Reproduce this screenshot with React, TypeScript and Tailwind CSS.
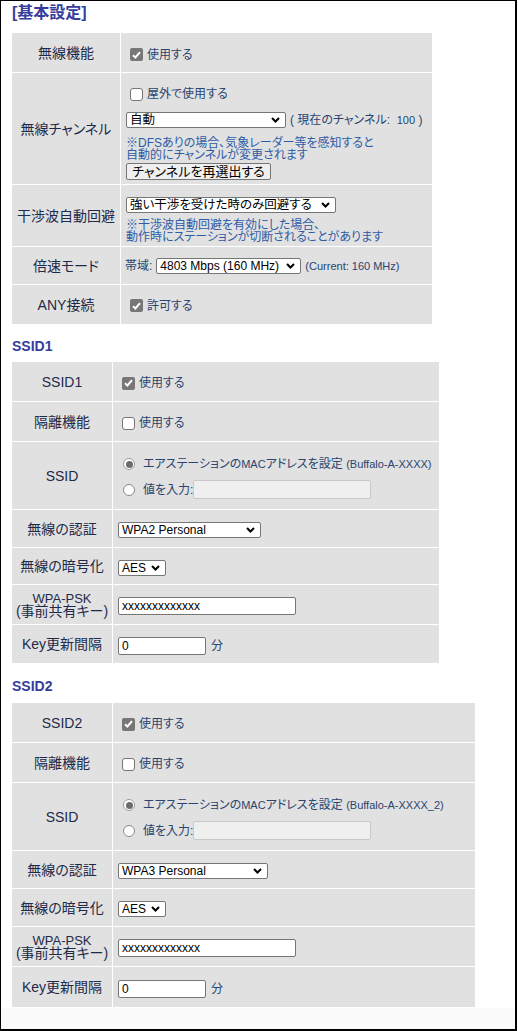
import React from 'react'

const labelCls =
  'bg-[#e1e1e1] flex flex-col items-center justify-center text-center text-[14px] leading-[14px] text-[#1e2a4a]'
const cellCls = 'bg-[#e1e1e1]'
const txt = 'text-[12px] leading-[14px] text-[#29446f] whitespace-pre'

function CheckBox({ on }: { on?: boolean }) {
  if (on) {
    return (
      <span className="w-[13px] h-[13px] rounded-[2px] bg-[#777777] flex items-center justify-center shrink-0">
        <svg width="9" height="8" viewBox="0 0 9 8">
          <path d="M1 4.3 L3.4 6.5 L8 1.2" fill="none" stroke="#fff" strokeWidth="2" />
        </svg>
      </span>
    )
  }
  return <span className="w-[13px] h-[13px] rounded-[3px] border border-[#767676] bg-white shrink-0" />
}

function Radio({ on }: { on?: boolean }) {
  if (on) {
    return (
      <span className="w-[12px] h-[12px] rounded-full border border-[#9d9d9d] bg-white flex items-center justify-center shrink-0">
        <span className="w-[7px] h-[7px] rounded-full bg-[#6b6b6b]" />
      </span>
    )
  }
  return <span className="w-[12px] h-[12px] rounded-full border border-[#8a8a8a] bg-white shrink-0" />
}

function Check({ on, text }: { on?: boolean; text: string }) {
  return (
    <div className="flex items-center">
      <CheckBox on={on} />
      <span className={`${txt} ml-[4px]`}>{text}</span>
    </div>
  )
}

function Chevron() {
  return (
    <svg width="9" height="6" viewBox="0 0 9 6" className="shrink-0">
      <path d="M1 1 L4.5 4.5 L8 1" fill="none" stroke="#000" strokeWidth="2" />
    </svg>
  )
}

function Select({ text, w, jp }: { text: string; w: string; jp?: boolean }) {
  return (
    <div
      className={`${w} h-[16px] border border-[#767676] rounded-[2px] bg-white flex items-center pl-[3px] pr-[5px] ${jp ? 'text-[12.5px]' : 'text-[12px]'} leading-[14px] text-black shrink-0`}
    >
      <span className="flex-1 whitespace-nowrap overflow-hidden">{text}</span>
      <Chevron />
    </div>
  )
}

function Input({ value, w }: { value: string; w: string }) {
  return (
    <div
      className={`${w} h-[18px] border border-[#767676] rounded-[2px] bg-white flex items-center pl-[3px] text-[12px] leading-[14px] text-black shrink-0`}
    >
      {value}
    </div>
  )
}

interface SsidProps {
  name: string
  mac: string
  auth: string
  authW: string
  cols: string
  hs: string[]
}

function SsidTable({ name, mac, auth, authW, cols, hs }: SsidProps) {
  return (
    <div className={`grid ${cols} gap-px w-fit`}>
      <div className={`${labelCls} ${hs[0]}`}>{name}</div>
      <div className={`${cellCls} flex items-center pl-[9px] pt-[3px]`}>
        <Check on text="使用する" />
      </div>

      <div className={`${labelCls} ${hs[1]}`}>隔離機能</div>
      <div className={`${cellCls} flex items-center pl-[9px] pt-[3px]`}>
        <Check text="使用する" />
      </div>

      <div className={`${labelCls} ${hs[2]}`}>SSID</div>
      <div className={`${cellCls} flex flex-col pt-[14px] pl-[10px]`}>
        <div className="flex items-center h-[16px]">
          <Radio on />
          <span className={`${txt} ml-[8px]`}>
            エアステーションの<span className="text-[11px]">MAC</span>アドレスを設定{' '}
            <span className="text-[11px]">({mac})</span>
          </span>
        </div>
        <div className="flex items-center mt-[8px]">
          <Radio />
          <span className={`${txt} ml-[8px]`}>値を入力:</span>
          <div className="w-[178px] h-[19px] border border-[#c9c9c9] rounded-[2px] bg-[#efefef]" />
        </div>
      </div>

      <div className={`${labelCls} ${hs[3]}`}>無線の認証</div>
      <div className={`${cellCls} flex items-center pl-[5px] pt-[3px]`}>
        <Select w={authW} text={auth} />
      </div>

      <div className={`${labelCls} ${hs[4]}`}>無線の暗号化</div>
      <div className={`${cellCls} flex items-center pl-[5px] pt-[3px]`}>
        <Select w="w-[48px]" text="AES" />
      </div>

      <div className={`${labelCls} ${hs[5]}`}>
        <span className="text-[13px] leading-[13px]">WPA-PSK</span>
        <span className="leading-[13px]">(事前共有キー)</span>
      </div>
      <div className={`${cellCls} flex items-center pl-[5px] pt-[3px]`}>
        <Input w="w-[178px]" value="xxxxxxxxxxxxx" />
      </div>

      <div className={`${labelCls} ${hs[6]}`}>Key更新間隔</div>
      <div className={`${cellCls} flex items-center pl-[5px] pt-[3px]`}>
        <Input w="w-[88px]" value="0" />
        <span className={`${txt} ml-[5px]`}>分</span>
      </div>
    </div>
  )
}

export default function App() {
  return (
    <div className="w-[517px] h-[1031px] border-l border-t border-r-2 border-b-2 border-black bg-white flex flex-col font-['Liberation_Sans','Noto_Sans_CJK_JP',sans-serif] [font-feature-settings:'palt']">
      <div className="pl-[11px]">
        <div className="h-[32px] pt-[1px] text-[16px] leading-[22px] font-bold text-[#353c9c]">[基本設定]</div>

        <div className="grid grid-cols-[108px_311px] gap-px w-fit">
          <div className={`${labelCls} h-[39px]`}>無線機能</div>
          <div className={`${cellCls} flex items-center pl-[9px] pt-[4px]`}>
            <Check on text="使用する" />
          </div>

          <div className={`${labelCls} h-[111px]`}>無線チャンネル</div>
          <div className={`${cellCls} flex flex-col items-start pt-[13px] pl-[5px]`}>
            <div className="flex items-center h-[16px] pl-[4px]">
              <Check text="屋外で使用する" />
            </div>
            <div className="flex items-center mt-[10px]">
              <Select w="w-[160px]" text="自動" jp />
              <span className={`${txt} ml-[4px]`}>
                ( 現在のチャンネル:  <span className="text-[11px]">100</span> )
              </span>
            </div>
            <p className="mt-[9px] text-[12px] leading-[12px] text-[#2e5ca6]">
              ※DFSありの場合、気象レーダー等を感知すると
              <br />
              自動的にチャンネルが変更されます
            </p>
            <div className="mt-[2px] w-[145px] h-[17px] border border-[#767676] rounded-[2px] bg-[#efefef] flex items-center justify-center text-[13px] leading-[15px] text-black">
              チャンネルを再選出する
            </div>
          </div>

          <div className={`${labelCls} h-[61px]`}>干渉波自動回避</div>
          <div className={`${cellCls} flex flex-col items-start pt-[12px] pl-[5px]`}>
            <Select w="w-[210px]" text="強い干渉を受けた時のみ回避する" jp />
            <p className="mt-[6px] text-[12px] leading-[12px] text-[#2e5ca6]">
              ※干渉波自動回避を有効にした場合、
              <br />
              動作時にステーションが切断されることがあります
            </p>
          </div>

          <div className={`${labelCls} h-[37px]`}>倍速モード</div>
          <div className={`${cellCls} flex items-center pl-[4px] pt-[1px]`}>
            <span className={txt}>帯域:</span>
            <div className="ml-[4px]">
              <Select w="w-[145px]" text="4803 Mbps (160 MHz)" />
            </div>
            <span className="ml-[4px] text-[11px] leading-[14px] text-[#29446f] whitespace-pre">(Current: 160 MHz)</span>
          </div>

          <div className={`${labelCls} h-[39px]`}>ANY接続</div>
          <div className={`${cellCls} flex items-center pl-[9px] pt-[2px]`}>
            <Check on text="許可する" />
          </div>
        </div>

        <div className="h-[38px] pt-[12px] text-[14px] leading-[20px] font-bold text-[#353c9c]">SSID1</div>
        <SsidTable
          name="SSID1"
          mac="Buffalo-A-XXXX"
          auth="WPA2 Personal"
          authW="w-[143px]"
          cols="grid-cols-[100px_326px]"
          hs={['h-[39px]', 'h-[39px]', 'h-[67px]', 'h-[37px]', 'h-[36px]', 'h-[39px]', 'h-[38px]']}
        />

        <div className="h-[40px] pt-[13px] text-[14px] leading-[20px] font-bold text-[#353c9c]">SSID2</div>
        <SsidTable
          name="SSID2"
          mac="Buffalo-A-XXXX_2"
          auth="WPA3 Personal"
          authW="w-[150px]"
          cols="grid-cols-[100px_362px]"
          hs={['h-[39px]', 'h-[39px]', 'h-[67px]', 'h-[37px]', 'h-[37px]', 'h-[39px]', 'h-[40px]']}
        />
        <div className="h-px" />
      </div>
      <div className="flex-1 bg-[#fafafa]" />
    </div>
  )
}
